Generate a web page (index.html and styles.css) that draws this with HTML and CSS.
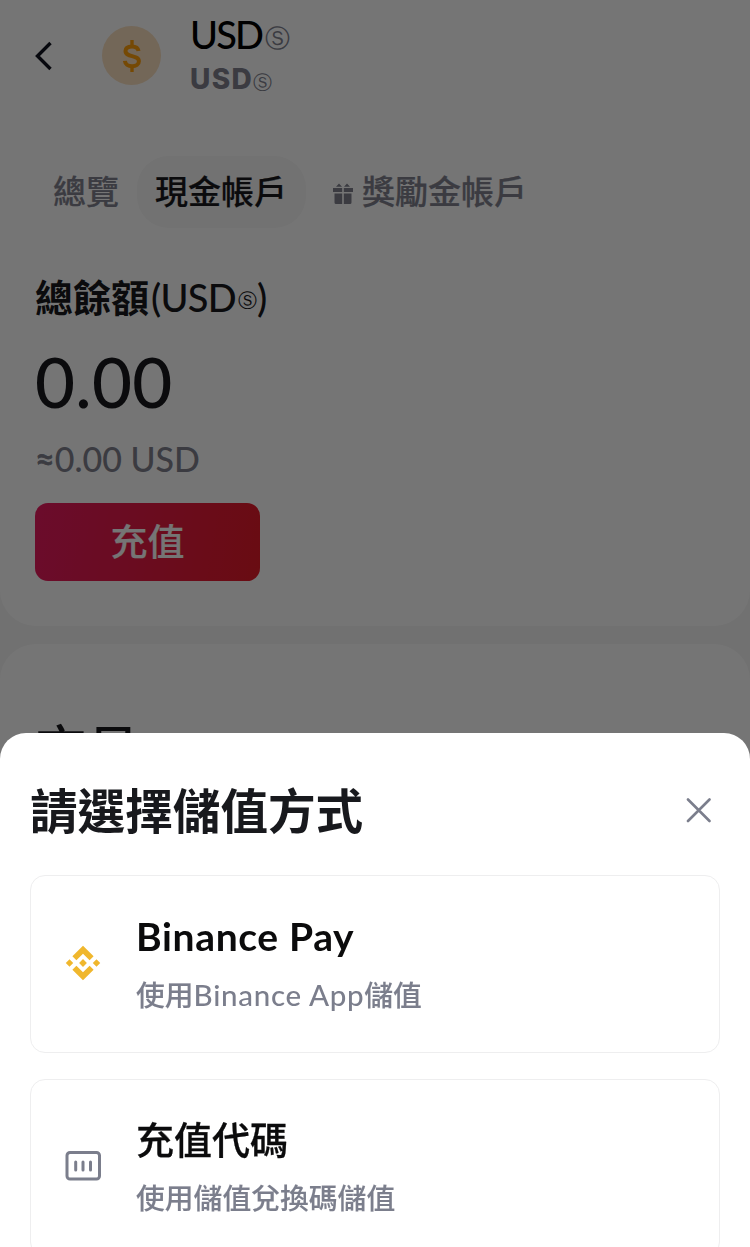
FILE: index.html
```html
<!DOCTYPE html>
<html lang="zh-Hant">

<head>
  <meta charset="UTF-8">
  <title>USD</title>
  <meta name="viewport" content="width=device-width, initial-scale=1.0">
  <link rel="stylesheet" href="styles.css">
</head>

<body>

  <main class="page">
    <section class="card wallet">
      <header class="header">
        <svg class="back" width="20" height="30" viewBox="0 0 20 30" fill="none" stroke="#11131f" stroke-width="3.4">
          <path d="M15.500 2 2.500 15l13 13" />
        </svg>
        <div class="coin">
          <svg width="20" height="34" viewBox="0 0 20 34" fill="none" stroke="#ff9f0a" stroke-width="4">
            <path d="M16.500 12C16 9 13.500 7.500 10 7.500c-4 0-6.500 1.700-6.500 4.600 0 6.600 13.400 3.400 13.400 10.200 0 3.200-2.900 4.900-6.700 4.900-4 0-7-1.900-7.300-5.400" />
            <path d="M10 1v6M10 27v6" stroke-width="3.400" />
          </svg>
        </div>
        <div class="names">
          <div class="name">USD<span class="mark">Ⓢ</span></div>
          <div class="symbol">USD<span class="mark">Ⓢ</span></div>
        </div>
      </header>

      <nav class="tabs">
        <a class="tab">總覽</a>
        <a class="tab active">現金帳戶</a>
        <a class="tab">
          <svg class="gift" width="20" height="21" viewBox="0 0 20 21" fill="#80828f">
            <path d="M0 5h9.200v4H0zM10.800 5H20v4h-9.200zM1.500 10.500h7.700V21H3q-1.500 0-1.500-1.500zM10.800 10.500h7.700v9q0 1.500-1.500 1.500h-6.200zM3 3.800 6 .5l3 3.300zM11 3.800l3-3.300 3 3.300z" />
          </svg>獎勵金帳戶
        </a>
      </nav>

      <h2 class="label">總餘額<span class="unit">(USD<span class="mark">Ⓢ</span>)</span></h2>
      <div class="amount">0.00</div>
      <div class="approx"><span class="about">≈</span>0.00 USD</div>
      <button class="deposit">充值</button>
    </section>

    <section class="card trades">
      <h2 class="trades-title">交易</h2>
    </section>
  </main>

  <div class="overlay"></div>

  <div class="sheet">
    <div class="sheet-head">
      <h1 class="sheet-title">請選擇儲值方式</h1>
      <svg class="close" width="25" height="25" viewBox="0 0 25 25" fill="none" stroke="#7b7e8c" stroke-width="2.6" stroke-linecap="round">
        <path d="M2 1.500l21.500 21.500M23.500 1.500l-21.500 21.500" />
      </svg>
    </div>

    <div class="option">
      <svg class="option-icon" width="36" height="36" viewBox="0 0 36 36" fill="#f0b72d">
        <path d="M18 .8 28.600 11.300 24.600 15.300 18 8.800 11.400 15.300 7.400 11.300zM18 35.200 7.400 24.700 11.400 20.700 18 27.200 24.600 20.700 28.600 24.700zM18 14.100 21.900 18 18 21.900 14.100 18zM4.500 14.300 8.200 18 4.500 21.700.8 18zM31.500 14.300 35.200 18 31.500 21.700 27.800 18z" />
      </svg>
      <div class="option-text">
        <div class="option-title latin">Binance Pay</div>
        <div class="option-desc mixed">使用<span class="app">Binance App</span>儲值</div>
      </div>
    </div>

    <div class="option">
      <svg class="option-icon" width="36" height="36" viewBox="0 0 36 36" fill="none" stroke="#7b7e8c" stroke-width="3">
        <rect x="2" y="3.500" width="32.500" height="26.500" rx="3" />
        <path d="M10.700 13v8M18 13v8M25.500 13v8" stroke-linecap="round" />
      </svg>
      <div class="option-text">
        <div class="option-title">充值代碼</div>
        <div class="option-desc">使用儲值兌換碼儲值</div>
      </div>
    </div>
  </div>

</body>

</html>
```
FILE: styles.css
```css
* {
  box-sizing: border-box;
}

body {
  margin: 0;
  height: 1247px;
  overflow: hidden;
  background: #f7f7f7;
  font-family: Lato, "Noto Sans CJK TC", sans-serif;
  font-weight: 500;
  color: #18191d;
}

h1,
h2 {
  margin: 0;
}

.page {
  display: flex;
  flex-direction: column;
  gap: 18px;
}

.card {
  background: #fff;
  border-radius: 36px;
}

.wallet {
  height: 626px;
  padding: 0 35px;
  border-top-left-radius: 0;
  border-top-right-radius: 0;
}

.header {
  display: flex;
  align-items: center;
  height: 111px;
}

.back {
  margin-right: 47px;
}

.coin {
  display: flex;
  align-items: center;
  justify-content: center;
  width: 59px;
  height: 59px;
  margin-right: 29px;
  border-radius: 50%;
  background: #fae0c0;
}

.name {
  height: 44px;
  font-size: 38px;
  line-height: 44px;
  letter-spacing: -1.800px;
  color: #000;
}

.mark {
  font-family: "DejaVu Sans", sans-serif;
  font-weight: 400;
  letter-spacing: 0;
  line-height: 1;
  color: #80828f;
}

.name .mark {
  margin-left: 3px;
  font-size: 25px;
  vertical-align: 2px;
}

.symbol {
  height: 44px;
  font-family: Inter, sans-serif;
  font-size: 28px;
  font-weight: 800;
  line-height: 47px;
  letter-spacing: 1.300px;
  color: #80828f;
}

.symbol .mark {
  font-size: 19px;
}

.tabs {
  display: flex;
  align-items: center;
  height: 72px;
  margin-top: 45px;
}

.tab {
  display: flex;
  align-items: center;
  height: 72px;
  padding: 0 18px 4px;
  border-radius: 32px;
  font-size: 33px;
  color: #80828f;
  -webkit-text-stroke: 0.200px;
}

.tab.active {
  padding: 0 19px 4px 18px;
  background: #f8f8f8;
  color: #18191d;
}

.tab:last-child {
  padding-left: 27px;
}

.gift {
  position: relative;
  top: 3px;
  margin-right: 9px;
}

.label {
  height: 56px;
  margin-top: 41px;
  font-size: 38px;
  font-weight: 700;
  line-height: 56px;
}

.unit {
  margin-left: 2px;
  font-weight: 500;
  letter-spacing: -0.700px;
}

.unit .mark {
  margin-left: 2px;
  font-size: 19px;
  vertical-align: 5px;
  color: #18191d;
}

.amount {
  height: 84px;
  margin-top: 15px;
  font-size: 69px;
  line-height: 84px;
  letter-spacing: 0.300px;
}

.approx {
  height: 40px;
  margin-top: 15px;
  font-size: 34px;
  line-height: 40px;
  color: #80828f;
}

.about {
  -webkit-text-stroke: 0.800px;
}

.deposit {
  display: block;
  width: 225px;
  height: 78px;
  margin-top: 24px;
  padding: 0 0 4px;
  border: 0;
  border-radius: 13px;
  background: linear-gradient(100deg, #e91c60, #e51c28);
  font: inherit;
  font-size: 37px;
  color: #fff;
  -webkit-text-stroke: 0.200px;
}

.trades {
  height: 603px;
  padding: 75px 35px;
}

.trades-title {
  font-size: 52px;
  font-weight: 500;
  line-height: 60px;
}

.overlay {
  position: fixed;
  inset: 0;
  background: rgba(0, 0, 0, 0.54);
}

.sheet {
  position: fixed;
  top: 733px;
  left: 0;
  right: 0;
  bottom: 0;
  overflow: hidden;
  padding: 0 30px;
  border-radius: 26px 26px 0 0;
  background: #fff;
}

.sheet-head {
  display: flex;
  align-items: center;
  justify-content: space-between;
  height: 142px;
  padding: 13px 9px 0 0;
}

.sheet-title {
  font-size: 47.600px;
  font-weight: 700;
  line-height: 60px;
}

.option {
  display: flex;
  align-items: center;
  height: 178px;
  margin-bottom: 26px;
  padding: 0 0 2px 34px;
  border: 1px solid #eeeeef;
  border-radius: 15px;
}

.option-icon {
  margin-right: 35px;
}

.option-title {
  height: 58px;
  font-size: 38px;
  line-height: 60px;
  color: #0b0b0c;
  -webkit-text-stroke: 0.300px;
}

.option-title.latin {
  font-size: 39px;
  font-weight: 700;
  line-height: 63px;
  letter-spacing: 0.650px;
  -webkit-text-stroke: 0;
}

.option-desc {
  height: 58px;
  font-size: 28.800px;
  line-height: 62px;
  color: #7b7e8c;
  -webkit-text-stroke: 0.150px;
}

.option-desc.mixed {
  line-height: 64px;
}

.app {
  font-size: 29.500px;
  letter-spacing: 0.700px;
  -webkit-text-stroke: 0;
}
```
